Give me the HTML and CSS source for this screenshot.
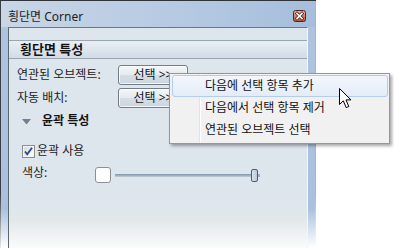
FILE: index.html
```html
<!DOCTYPE html>
<html lang="ko">
<head>
<meta charset="utf-8">
<link rel="stylesheet" href="styles.css">
</head>
<body>
<div class="window">
  <div class="titlebar">
    <span class="title">횡단면 Corner</span>
    <svg class="close" width="13" height="12" viewBox="0 0 13 12">
      <defs>
        <linearGradient id="cg" x1="0" y1="0" x2="0" y2="1">
          <stop offset="0" stop-color="#efb7a8"/>
          <stop offset="0.5" stop-color="#d9826f"/>
          <stop offset="1" stop-color="#c0523e"/>
        </linearGradient>
      </defs>
      <rect x="0.5" y="0.5" width="12" height="11" rx="2" fill="url(#cg)" stroke="#4b2524"/>
      <path d="M4 3.5 L9 8.5 M9 3.5 L4 8.5" stroke="#5a2a26" stroke-width="3.2" stroke-linecap="square"/>
      <path d="M4 3.5 L9 8.5 M9 3.5 L4 8.5" stroke="#ffffff" stroke-width="1.6" stroke-linecap="square"/>
    </svg>
  </div>
  <div class="panel">
    <div class="panel-top"></div>
    <div class="section-head">횡단면 특성</div>
    <div class="row row-first">
      <span class="label">연관된 오브젝트:</span>
      <span class="btn">선택 &gt;&gt;</span>
    </div>
    <div class="row">
      <span class="label">자동 배치:</span>
      <span class="btn">선택 &gt;&gt;</span>
    </div>
    <div class="group">
      <svg class="tri" width="9" height="6" viewBox="0 0 9 6"><path d="M0 0 L9 0 L4.5 5.5 Z" fill="#6f8194"/></svg>
      <span class="group-title">윤곽 특성</span>
    </div>
    <div class="check-row">
      <svg class="checkbox" width="13" height="13" viewBox="0 0 13 13">
        <defs>
          <linearGradient id="kg" x1="0" y1="0" x2="1" y2="1">
            <stop offset="0" stop-color="#d9dadc"/>
            <stop offset="1" stop-color="#fbfbfb"/>
          </linearGradient>
        </defs>
        <rect x="0.5" y="0.5" width="12" height="12" fill="#f4f4f4" stroke="#8e8f8f"/>
        <rect x="2" y="2" width="9" height="9" fill="url(#kg)"/>
        <path d="M3 6.5 L5.2 9.2 L10 2.8" fill="none" stroke="#2a4596" stroke-width="1.8"/>
      </svg>
      <span class="check-label">윤곽 사용</span>
    </div>
    <div class="color-row">
      <span class="color-label">색상:</span>
      <span class="swatch"></span>
      <div class="slider">
        <span class="track"></span>
        <span class="thumb"></span>
        <span class="track-end"></span>
      </div>
    </div>
  </div>
  <div class="menu">
    <div class="item active">다음에 선택 항목 추가</div>
    <div class="item">다음에서 선택 항목 제거</div>
    <div class="item">연관된 오브젝트 선택</div>
  </div>
  <svg class="cursor" width="13" height="21" viewBox="0 0 13 21">
    <path d="M0.5 0.5 L0.5 16.5 L4.3 12.8 L7.2 19.6 L9.8 18.5 L7 11.9 L12 11.9 Z" fill="#ffffff" stroke="#000000" stroke-width="1" stroke-linejoin="miter"/>
  </svg>
</div>
</body>
</html>
```

FILE: styles.css
```css
* {
  box-sizing: border-box;
  margin: 0;
  padding: 0;
}

html, body {
  background: #ffffff;
}

body {
  width: 394px;
  height: 248px;
  overflow: hidden;
  font-family: "Noto Sans", "Noto Sans CJK KR", sans-serif;
  font-size: 12px;
  color: #1b1b1b;
}

.window {
  position: relative;
  width: 316px;
  height: 248px;
  display: flex;
  flex-direction: column;
  border-top: 1px solid #2f3439;
  padding: 0 8px;
  background:
    linear-gradient(#3b4046 0, #3b4046 78%, #e8e8e8 100%) left top / 1px 100% no-repeat,
    linear-gradient(#62d0f2 0, #62d0f2 78%, #ffffff 100%) right top / 1px 100% no-repeat,
    linear-gradient(#aec4e0 0, #a9c1df 84%, #ffffff 100%);
}

.titlebar {
  height: 26px;
  flex: none;
  display: flex;
  justify-content: space-between;
  align-items: flex-start;
  margin: 0 -7px;
  padding: 8px 9px 0 7px;
  background: linear-gradient(to right, #c8d6e6 0%, #b8cbe2 50%, #a6bedb 100%);
}

.title {
  line-height: 16px;
  font-size: 12px;
  color: #1e1e1e;
}

.close {
  display: block;
  margin-top: 1px;
}

.panel {
  flex: 1;
  display: flex;
  flex-direction: column;
  border-top: 1px solid #6c7883;
  border-left: 1px solid #5e666e;
  border-right: 1px solid #f4f7fa;
  background: linear-gradient(#dee6ed 0, #dee6ed 176px, #e2e8ea 192px, #fbfcfc 221px);
}

.panel-top {
  height: 12px;
  flex: none;
}

.section-head {
  height: 19px;
  flex: none;
  border-top: 1px solid #98a6b0;
  border-bottom: 1px solid #98a6b0;
  background: linear-gradient(#e9eef7, #d2dce6);
  font-weight: bold;
  font-size: 13px;
  line-height: 17px;
  padding-left: 11px;
  color: #141414;
}

.row {
  display: flex;
  align-items: center;
  height: 20px;
  margin-top: 3px;
  padding-left: 8px;
}

.row-first {
  margin-top: 6px;
}

.label {
  width: 101px;
  line-height: 16px;
}

.btn {
  width: 70px;
  height: 20px;
  display: flex;
  align-items: center;
  justify-content: center;
  border: 1px solid #737d87;
  border-radius: 3px;
  background: linear-gradient(#f3f6f9 0%, #e6ebf0 48%, #d5dde5 52%, #cdd6df 100%);
  box-shadow: inset 0 0 0 1px rgba(255, 255, 255, 0.75);
  line-height: 16px;
  color: #111;
}

.group {
  display: flex;
  align-items: center;
  height: 20px;
  margin-top: 3px;
  padding-left: 13px;
}

.tri {
  display: block;
  margin-right: 11px;
  margin-top: 1px;
}

.group-title {
  font-weight: bold;
  line-height: 16px;
  color: #141414;
}

.check-row {
  display: flex;
  align-items: center;
  height: 20px;
  margin-top: 10px;
  padding-left: 13px;
}

.checkbox {
  display: block;
  margin-right: 2px;
}

.check-label {
  line-height: 16px;
}

.color-row {
  display: flex;
  align-items: center;
  height: 20px;
  margin-top: 4px;
  padding-left: 13px;
}

.color-label {
  width: 73px;
  line-height: 16px;
  margin-bottom: 5px;
}

.swatch {
  width: 16px;
  height: 16px;
  border: 1px solid #8b9096;
  border-radius: 3px;
  background: #ffffff;
  margin-right: 4px;
}

.slider {
  display: flex;
  align-items: center;
}

.track {
  width: 136px;
  height: 3px;
  background: linear-gradient(#7f95a8, #9fb1c0 50%, #c3d0da);
}

.thumb {
  width: 7px;
  height: 13px;
  border: 1px solid #4d5d6d;
  border-radius: 2px;
  background: linear-gradient(to right, #d6e2ee, #b7c9db);
}

.track-end {
  width: 2px;
  height: 3px;
  background: #9fb1c0;
}

.menu {
  position: absolute;
  left: 169px;
  top: 72px;
  width: 221px;
  height: 71px;
  border: 1px solid #979797;
  padding-top: 1px;
  background: linear-gradient(to right, #f1f1f1 0, #f1f1f1 29px, #e2e3e3 29px, #e2e3e3 30px, #ffffff 30px, #ffffff 31px, #f1f1f1 31px);
  box-shadow: 2px 2px 3px rgba(0, 0, 0, 0.35);
}

.item {
  height: 22px;
  margin: 0 1px 0 2px;
  padding-left: 32px;
  border: 1px solid transparent;
  border-radius: 3px;
  line-height: 20px;
  color: #111;
}

.item.active {
  border-color: #b3cdec;
  background: linear-gradient(#f3f7fc, #e3ecf8);
}

.cursor {
  position: absolute;
  left: 339px;
  top: 87px;
}
```
